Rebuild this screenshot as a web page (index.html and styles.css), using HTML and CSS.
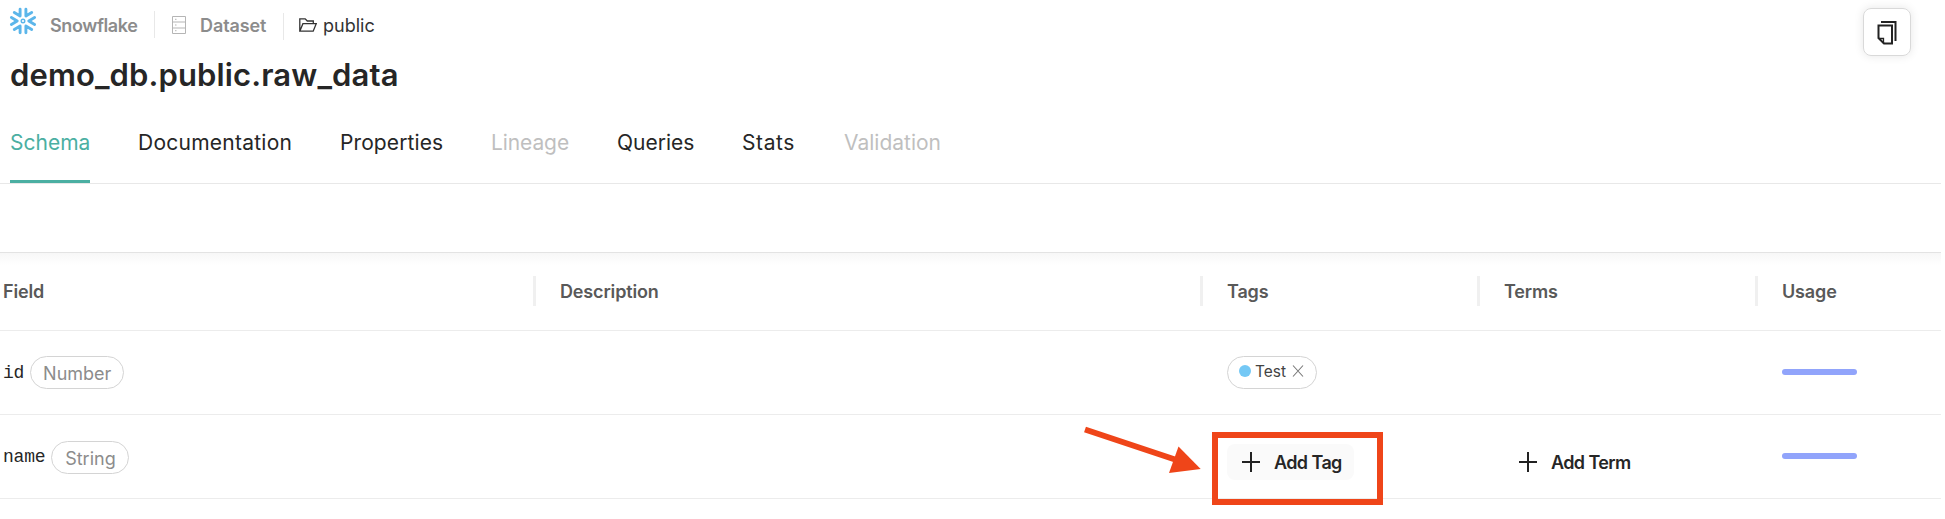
FILE: index.html
```html
<!DOCTYPE html>
<html lang="en">
<head>
<meta charset="utf-8">
<title>demo_db.public.raw_data</title>
<link rel="stylesheet" href="styles.css">
</head>
<body>
<header class="header">
  <div>
    <nav class="crumbs">
      <svg class="flake" width="28" height="28" viewBox="-14 -14 28 28" fill="none" stroke="#5cb6ea" stroke-width="2.900" stroke-linecap="round" stroke-linejoin="round">
        <path d="M2.900-11.800V-5L8.700-8.400M-2.900-11.800V-5L-8.700-8.400M2.900 11.800V5L8.700 8.400M-2.900 11.800V5L-8.700 8.400M11.600-3.400 5.800 0l5.800 3.400M-11.600-3.400-5.800 0l-5.800 3.400"/>
        <circle r="1.800" stroke-width="1.400"/>
      </svg>
      <span class="crumb platform">Snowflake</span>
      <span class="divider"></span>
      <svg class="db" width="14" height="18" viewBox="0 0 14 18" fill="none" stroke="#b5b5b5"><path d="M.5.500h13v17H.5zM.5 6h13M.5 12h13"/><path d="M3 3.300h1.500M3 9h1.500M3 14.700h1.500"/></svg>
      <span class="crumb dataset">Dataset</span>
      <span class="divider low"></span>
      <svg class="folder" width="18" height="14" viewBox="0 0 18 14" fill="none" stroke="#333" stroke-width="1.300"><path d="M.8 13V.8h5.400L8.300 3h6v2.600M.8 13.200 3.900 5.700h13.300l-3 7.500z"/></svg>
      <span class="public">public</span>
    </nav>
    <h1 class="title">demo_db.public.raw_data</h1>
  </div>
  <button class="copy" aria-label="Copy">
    <svg width="20" height="25" viewBox="0 0 20 25" fill="none" stroke="#222" stroke-width="2"><path d="M4 2h14.500V21M1.500 5.500H15V23.500H7L1.500 18z"/><path d="M2 18.500h4.500v5" stroke-width="1.300"/></svg>
  </button>
</header>
<nav class="tabs">
  <a class="tab active t1">Schema</a>
  <a class="tab t2">Documentation</a>
  <a class="tab t3">Properties</a>
  <a class="tab off t4">Lineage</a>
  <a class="tab t5">Queries</a>
  <a class="tab t6">Stats</a>
  <a class="tab off t7">Validation</a>
</nav>
<div class="toolbar"></div>
<main class="table">
  <div class="row head">
    <div>Field</div><div class="desc">Description</div><div>Tags</div><div class="terms">Terms</div><div>Usage</div>
  </div>
  <div class="row">
    <div class="field"><code>id</code><span class="type number">Number</span></div>
    <div></div>
    <div><span class="tag"><i class="dot"></i>Test<svg width="12" height="12" viewBox="0 0 12 12" stroke="#777" stroke-width="1.100"><path d="M1 .5l10 11M11 .5l-10 11"/></svg></span></div>
    <div></div>
    <div><i class="usage"></i></div>
  </div>
  <div class="row">
    <div class="field"><code>name</code><span class="type string">String</span></div>
    <div></div>
    <div><button class="add shaded"><svg width="18" height="20" viewBox="0 0 18 20" stroke="#222" stroke-width="2"><path d="M9 0v20M0 10h18"/></svg><span>Add Tag</span></button></div>
    <div><button class="add"><svg width="18" height="20" viewBox="0 0 18 20" stroke="#222" stroke-width="2"><path d="M9 0v20M0 10h18"/></svg><span>Add Term</span></button></div>
    <div><i class="usage"></i></div>
  </div>
</main>
<svg class="callout" width="300" height="84" viewBox="0 0 300 84" fill="none" stroke="#ef4519">
  <path d="M1 5.500 91 35.500" stroke-width="6"/>
  <path d="M94.500 22.500 116.700 45 85 49z" fill="#ef4519" stroke="none"/>
  <rect x="131" y="11" width="165" height="67" stroke-width="6"/>
</svg>
</body>
</html>
```
FILE: styles.css
```css
* { box-sizing: border-box; }
body { margin: 0; width: 1941px; height: 519px; overflow: hidden; background: #fff; color: #262626; font-family: Inter, "Noto Sans", sans-serif; }
button { font: inherit; color: inherit; border: 0; background: none; }
svg { flex: none; display: block; }
.header { height: 110px; display: flex; justify-content: space-between; padding: 8px 30px 0 10px; }
.crumbs { display: flex; height: 34px; font-size: 18px; line-height: 35px; color: #8c8c8c; white-space: nowrap; }
.flake { margin: -1px 13px 0 -1px; }
.crumb { font-weight: 600; letter-spacing: -.4px; }
.platform { width: 88px; }
.dataset { width: 68px; letter-spacing: -.1px; }
.divider { width: 1px; height: 27px; margin: 3px 17px 0 16px; background: #e8e8e8; }
.db { margin: 8px 14px 0 0; }
.divider.low { margin: 5px 15px 0; }
.folder { margin: 10px 6px 0 0; }
.public { color: #333; }
.title { margin: 11px 0 0; font-size: 31px; line-height: 44px; font-weight: 600; letter-spacing: .12px; white-space: nowrap; }
.copy { width: 48px; height: 48px; padding: 10px 13px; border: 1px solid #d9d9d9; border-radius: 8px; box-shadow: 0 0 10px rgba(0,0,0,.1); }
.tabs { display: flex; gap: 48px; height: 74px; padding-left: 10px; border-bottom: 1px solid #e8e8e8; font-size: 21px; line-height: 66px; white-space: nowrap; }
.tab { height: 73px; }
.t1 { width: 80px; }
.t2 { width: 154px; letter-spacing: .25px; }
.t3 { width: 103px; letter-spacing: .1px; }
.t4 { width: 78px; letter-spacing: -.1px; }
.t5 { width: 77px; }
.t6 { width: 54px; letter-spacing: .6px; }
.t7 { width: 98px; }
.active { color: #4bafa2; border-bottom: 3px solid #4bafa2; }
.off { color: #bfbfbf; }
.toolbar { height: 69px; border-bottom: 1px solid #e3e3e3; }
.table { background: linear-gradient(#f7f7f7, #fff 12px); }
.row { display: grid; grid-template-columns: 533px 667px 277px 278px 1fr; height: 84px; border-bottom: 1px solid #ececec; }
.row > div { padding-left: 26px; }
.row > div:first-child { padding-left: 3px; }
.head { height: 78px; padding-top: 23px; font-size: 18px; line-height: 32px; font-weight: 600; letter-spacing: -.15px; color: #595959; }
.head > div { height: 30px; border-left: 3px solid #f0f0f0; padding-left: 24px; }
.head > div:first-child { border: 0; }
.field { display: flex; align-items: flex-start; padding-top: 25px; }
code { font: 18px/34px "Courier New", "Liberation Mono", monospace; letter-spacing: -.2px; }
.type { height: 33px; margin-left: 6px; border: 1px solid #d4d4d4; border-radius: 17px; font-size: 18px; line-height: 33px; text-align: center; color: #8c8c8c; }
.number { width: 94px; }
.string { width: 78px; margin-top: 1px; }
.tag { display: flex; align-items: center; width: 90px; height: 33px; margin: 25px 0 0 1px; padding: 0 0 3px 11px; border: 1px solid #d4d4d4; border-radius: 17px; font-size: 15.5px; color: #434343; }
.dot { width: 12px; height: 12px; margin-right: 4px; border-radius: 50%; background: #74c8f5; }
.tag svg { margin-left: 6px; }
.usage { display: block; width: 75px; height: 6px; margin: 38px 0 0 1px; border-radius: 3px; background: #91a4fb; }
.add { display: flex; align-items: center; gap: 14px; width: 127px; height: 36px; margin: 29px 0 0 1px; padding: 0 0 0 15px; border-radius: 8px; font-size: 18px; font-weight: 600; letter-spacing: -.6px; white-space: nowrap; }
.shaded { background: #fafafa; }
.callout { position: absolute; left: 1084px; top: 424px; }
```
